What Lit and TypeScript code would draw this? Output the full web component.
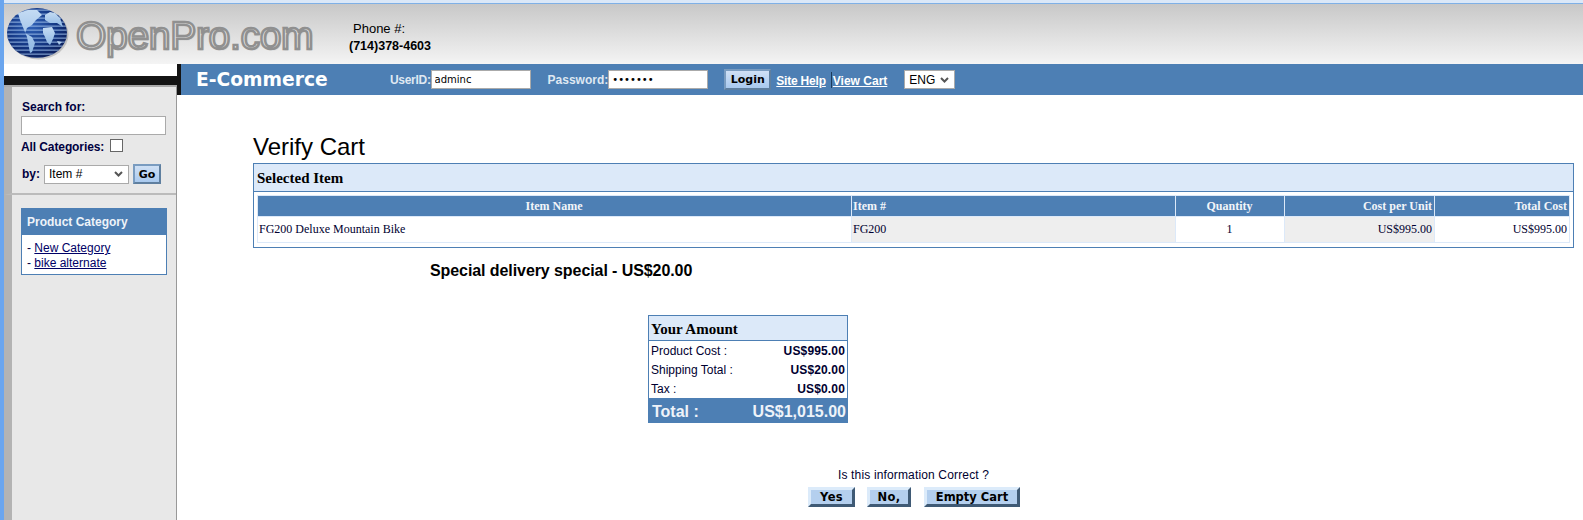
import { LitElement, html, css } from "lit";
import { customElement } from "lit/decorators.js";

const SANS = css`"Liberation Sans", Arial, sans-serif`;
const SERIF = css`"Liberation Serif", "Times New Roman", serif`;
const CHEVRON = css`url("data:image/svg+xml,%3Csvg xmlns='http://www.w3.org/2000/svg' width='9' height='6'%3E%3Cpath d='M1 1l3.5 3.5L8 1' fill='none' stroke='%23555' stroke-width='2'/%3E%3C/svg%3E")`;

@customElement("app-root")
export class AppRoot extends LitElement {
  static styles = css`
    :host { display: block; width: 1583px; height: 520px; overflow: hidden; box-sizing: border-box; border-left: 4px solid #6aa5ee; background: #fff; color: #000; font-family: ${SANS}; font-size: 12px; }
    * { box-sizing: border-box; }
    .strip { height: 4px; margin-left: -4px; background: #dbe8f8; border-bottom: 1px solid #7fb0e6; }
    .header { height: 60px; display: flex; background: linear-gradient(#c8c8c8, #f4f4f4); }
    .logo { display: flex; align-items: flex-start; width: 345px; padding: 3px 0 0 3px; }
    .globe { width: 64px; height: 56px; flex: none; }
    .wordmark { font-size: 39px; line-height: 44px; margin: 7px 0 0 5px; letter-spacing: -0.3px; color: #e2e2e2; -webkit-text-stroke: 2.4px #909090; text-shadow: 1px 1px 1px #999; white-space: nowrap; }
    .phone { padding-top: 16px; line-height: 17px; font-size: 13px; }
    .phone div:first-child { padding-left: 4px; }
    .phone b { font-size: 12.5px; }
    .body { display: grid; grid-template-columns: 173px 1fr; height: 456px; }
    .left { display: flex; flex-direction: column; }
    .spacer { height: 12px; background: #fff; }
    .black { height: 9px; background: #141414; }
    .side { flex: 1; display: flex; flex-direction: column; border-top: 2px solid #aaa; border-right: 1px solid #999; background: #e8e8e8; color: #000040; }
    .sec { border-left: 8px solid #b3b3b3; padding-left: 9px; }
    .search { height: 108px; border-bottom: 2px solid #bbb; padding-top: 13px; font-weight: bold; }
    .search .lbl { padding-left: 1px; line-height: 14px; }
    .q { display: block; width: 145px; height: 19px; margin-top: 2px; border: 1px solid #aaa; background: #fff; padding: 0; }
    .all { display: flex; align-items: flex-start; margin-top: 1px; height: 28px; gap: 6px; }
    .all span { line-height: 18px; margin-top: 2px; letter-spacing: -0.1px; }
    .check { appearance: none; width: 13px; height: 13px; margin: 3px 0 0; border: 1px solid #666; background: #fff; }
    .by { display: flex; align-items: center; gap: 4px; padding-left: 1px; }
    .by select { width: 85px; height: 19px; }
    select { appearance: none; font-family: ${SANS}; font-size: 12px; border: 1px solid #aaa; background: #fff ${CHEVRON} no-repeat right 5px center; color: #000; border-radius: 0; padding: 0 0 0 4px; }
    .btn { display: block; padding: 0; font-family: "DejaVu Sans", Verdana, sans-serif; font-weight: bold; font-size: 11px; color: #000; background: linear-gradient(#cfe0f5, #a9c9ee); border: 2px solid; border-color: #7a9cc0 #5f7f9f #5f7f9f #7a9cc0; }
    .go { width: 28px; height: 20px; }
    .catwrap { flex: 1; padding-top: 13px; }
    .cat { width: 146px; height: 67px; border: 1px solid #4d7fb4; background: #fff; }
    .cat h3 { margin: 0; height: 26px; background: #4d7fb4; color: #eef3f9; font-size: 12px; font-weight: bold; line-height: 27px; padding-left: 5px; }
    .cat ul { list-style: none; margin: 0; padding: 6px 0 0 5px; line-height: 15px; }
    a { color: #000066; }
    .right { display: flex; flex-direction: column; }
    .nav { height: 31px; display: flex; align-items: center; border-left: 4px solid #141414; background: #4d7fb4; color: #dfe8f2; font-weight: bold; font-size: 12px; }
    .brand { width: 209px; padding-left: 15px; font-family: "DejaVu Sans", Verdana, sans-serif; font-size: 18.7px; color: #fff; }
    .user { letter-spacing: -0.3px; }
    .nav input { width: 100px; height: 19px; border: 1px solid #aaa; background: #fff; padding: 0 0 0 3px; font-size: 10px; font-family: "DejaVu Sans", sans-serif; color: #000; font-weight: normal; }
    .pw { margin-left: 17px; }
    .login { width: 47px; height: 21px; margin-left: 16px; }
    .nav a { color: #fff; margin-top: 2px; }
    .help { margin-left: 5px; letter-spacing: -0.2px; }
    .sep { width: 1px; height: 16px; background: #1c3c5c; margin: 0 1px 0 5px; }
    .lang { width: 51px; height: 19px; margin-left: 17px; }
    .main { padding: 38px 9px 0 76px; }
    h1 { margin: 0 0 2px; font-size: 24px; font-weight: normal; line-height: 28px; }
    .card { border: 1px solid #4d7fb4; }
    .card h2 { margin: 0; height: 28px; line-height: 28px; padding-left: 3px; background: #dce9f9; border-bottom: 1px solid #4d7fb4; font-family: ${SERIF}; font-size: 15px; font-weight: bold; }
    .wrap { padding: 3px 3px 4px; }
    table.items { width: 100%; table-layout: fixed; border-collapse: collapse; font-family: ${SERIF}; font-size: 12px; color: #000030; }
    .items th { height: 21px; padding: 0 2px 0 1px; background: #4d7fb4; color: #f2f5f9; border: 1px solid #dce9f9; }
    .items td { height: 26px; padding: 0 2px 0 1px; border: 1px solid #dce9f9; }
    .l { text-align: left; } .r { text-align: right; } .c { text-align: center; }
    .shade { background: #eee; }
    .special { margin: 13px 0 0 177px; font-size: 16px; font-weight: bold; line-height: 20px; letter-spacing: -0.08px; }
    .amount { width: 200px; margin: 34px 0 0 395px; border: 1px solid #4d7fb4; color: #000030; }
    .amount h2 { margin: 0; height: 25px; line-height: 27px; padding-left: 2px; background: #dce9f9; border-bottom: 1px solid #4d7fb4; color: #000; font-family: ${SERIF}; font-size: 15px; font-weight: bold; }
    .line { display: flex; justify-content: space-between; height: 19px; line-height: 21px; padding: 0 2px; }
    .line b { letter-spacing: 0.15px; }
    .total { display: flex; justify-content: space-between; height: 25px; line-height: 27px; padding: 0 2px 0 4px; background: #4d7fb4; color: #eef3f9; font-size: 16px; font-weight: bold; margin: 0 -1px -1px; }
    .confirm { margin: 45px 0 0 0; width: 1318px; }
    .ask { padding-left: 585px; line-height: 14px; width: 780px; color: #000030; letter-spacing: 0.15px; }
    .actions { display: flex; margin: 5px 0 0 555px; }
    .act { height: 20px; font-size: 11.5px; letter-spacing: 0.3px; background: #b4cfee; border: 3px solid; border-color: #dcebfa #3f5a75 #3f5a75 #dcebfa; line-height: 14px; }
    .yes { width: 47px; } .no { width: 44px; margin-left: 12px; } .empty { width: 96px; margin-left: 13px; letter-spacing: 0; }
  `;

  render() {
    return html`
      <div class="strip"></div>
      <div class="header">
        <div class="logo">
          <svg class="globe" viewBox="7 7 64 56" aria-hidden="true">
            <defs>
              <radialGradient id="ball" cx="0.4" cy="0.35" r="0.75">
                <stop offset="0" stop-color="#2f62b8" /><stop offset="0.6" stop-color="#12347f" /><stop offset="1" stop-color="#0b1a52" />
              </radialGradient>
              <pattern id="lines" width="4" height="4" patternUnits="userSpaceOnUse">
                <rect width="4" height="1.3" y="1.5" fill="#9fc0ea" opacity="0.7" />
              </pattern>
              <linearGradient id="land" x1="0" y1="0" x2="0" y2="1">
                <stop offset="0" stop-color="#c4dbf3" /><stop offset="1" stop-color="#8fb8e4" />
              </linearGradient>
            </defs>
            <ellipse cx="38.5" cy="34.5" rx="30" ry="25" fill="#777" opacity="0.35" />
            <ellipse cx="37" cy="33" rx="30" ry="25" fill="url(#ball)" />
            <ellipse cx="37" cy="33" rx="30" ry="25" fill="url(#lines)" />
            <path fill="url(#land)" d="M18 13 L28 10 L37 10 L42 15 L36 20 L32 25 L27 28 L25 33 L32 37 L35 43 L32 52 L30 53 L27 37 L20 20 Z" />
            <path fill="url(#land)" d="M45 15 L50 12 L55 13 L60 18 L63 27 L57 23 L50 23 L45 20 Z" />
            <path fill="url(#land)" d="M43 28 L52 27 L55 33 L53 39 L50 45 L47 42 L45 37 L43 33 Z" />
            <path fill="url(#land)" d="M57 41 L62 42 L59 45 Z" />
          </svg>
          <div class="wordmark">OpenPro.com</div>
        </div>
        <div class="phone"><div>Phone #:</div><div><b>(714)378-4603</b></div></div>
      </div>
      <div class="body">
        <div class="left">
          <div class="spacer"></div>
          <div class="black"></div>
          <aside class="side">
            <div class="sec search">
              <div class="lbl">Search for:</div>
              <input class="q" type="text" />
              <div class="all"><span>All Categories:</span><input class="check" type="checkbox" /></div>
              <div class="by">
                <span>by:</span>
                <select><option>Item #</option></select>
                <button class="btn go">Go</button>
              </div>
            </div>
            <div class="sec catwrap">
              <div class="cat">
                <h3>Product Category</h3>
                <ul>
                  <li>- <a href="#">New Category</a></li>
                  <li>- <a href="#">bike alternate</a></li>
                </ul>
              </div>
            </div>
          </aside>
        </div>
        <div class="right">
          <nav class="nav">
            <div class="brand">E-Commerce</div>
            <span class="user">UserID:</span><input type="text" value="adminc" />
            <span class="pw">Password:</span><input type="password" value="1234567" />
            <button class="btn login">Login</button>
            <a class="help" href="#">Site Help</a><span class="sep"></span><a href="#">View Cart</a>
            <select class="lang"><option>ENG</option></select>
          </nav>
          <main class="main">
            <h1>Verify Cart</h1>
            <section class="card">
              <h2>Selected Item</h2>
              <div class="wrap">
                <table class="items">
                  <colgroup><col style="width:594px" /><col style="width:324px" /><col style="width:109px" /><col style="width:150px" /><col /></colgroup>
                  <thead><tr><th class="c">Item Name</th><th class="l">Item #</th><th class="c">Quantity</th><th class="r">Cost per Unit</th><th class="r">Total Cost</th></tr></thead>
                  <tbody><tr><td class="l">FG200 Deluxe Mountain Bike</td><td class="l shade">FG200</td><td class="c">1</td><td class="r shade">US$995.00</td><td class="r">US$995.00</td></tr></tbody>
                </table>
              </div>
            </section>
            <div class="special">Special delivery special - US$20.00</div>
            <section class="amount">
              <h2>Your Amount</h2>
              <div class="line"><span>Product Cost :</span><b>US$995.00</b></div>
              <div class="line"><span>Shipping Total :</span><b>US$20.00</b></div>
              <div class="line"><span>Tax :</span><b>US$0.00</b></div>
              <div class="total"><span>Total :</span><span>US$1,015.00</span></div>
            </section>
            <div class="confirm">
              <div class="ask">Is this information Correct ?</div>
              <div class="actions">
                <button class="btn act yes">Yes</button>
                <button class="btn act no">No,</button>
                <button class="btn act empty">Empty Cart</button>
              </div>
            </div>
          </main>
        </div>
      </div>
    `;
  }
}
